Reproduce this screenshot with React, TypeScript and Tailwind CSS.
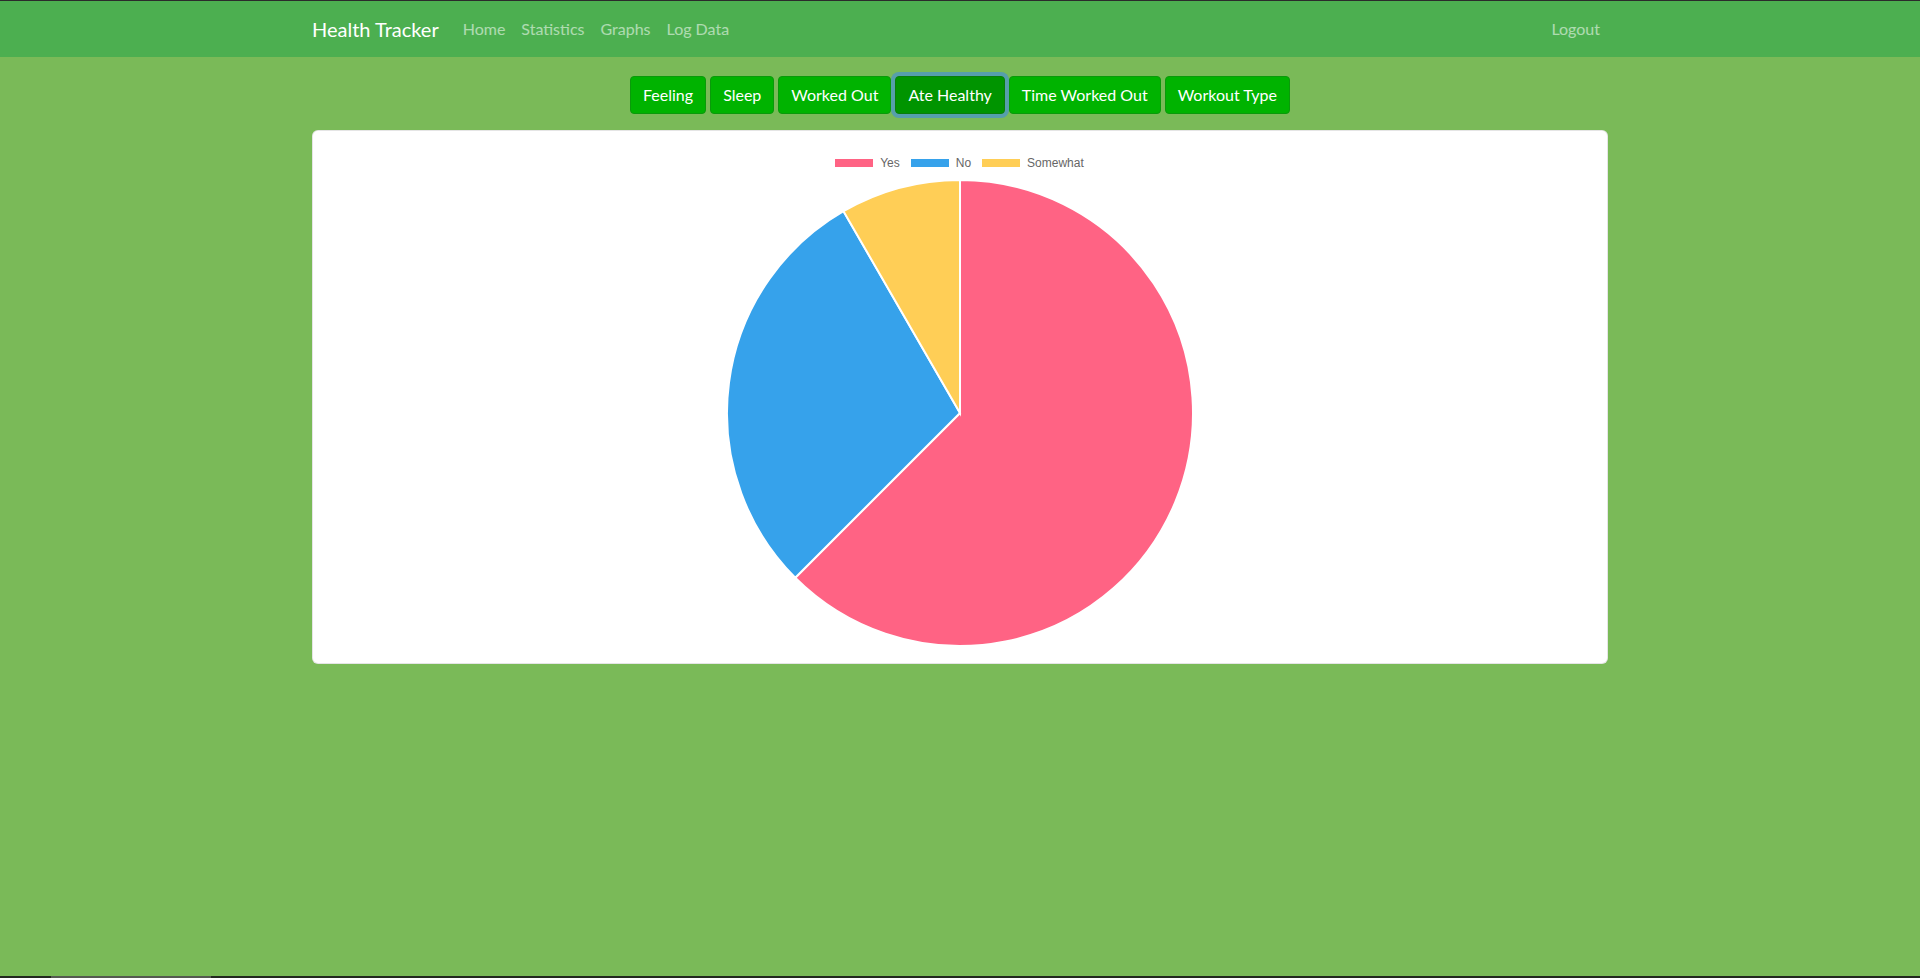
import React from "react";

const buttons = ["Feeling", "Sleep", "Worked Out", "Ate Healthy", "Time Worked Out", "Workout Type"];

const legend = [
  { label: "Yes", color: "bg-[#ff6384]" },
  { label: "No", color: "bg-[#36a2eb]" },
  { label: "Somewhat", color: "bg-[#ffce56]" },
];

function PieChart() {
  return (
    <div className="flex h-[500px] flex-col items-center">
      <div className="flex h-8 items-center pt-[10px] pb-[10px] pl-[8px] font-['Liberation_Sans',Arial,sans-serif] text-[12px] text-[#666]">
        {legend.map((l) => (
          <div key={l.label} className="mr-[10px] flex items-center">
            <span className={`mr-[6px] h-[10px] w-[40px] border border-white ${l.color}`} />
            <span className="leading-3">{l.label}</span>
          </div>
        ))}
      </div>
      <svg width="468" height="468" viewBox="0 0 468 468">
        <path d="M234 234 L234 1 A233 233 0 1 1 69.24 398.76 Z" fill="#ff6384" stroke="#fff" strokeWidth="2" />
        <path d="M234 234 L69.24 398.76 A233 233 0 0 1 117.5 32.21 Z" fill="#36a2eb" stroke="#fff" strokeWidth="2" />
        <path d="M234 234 L117.5 32.21 A233 233 0 0 1 234 1 Z" fill="#ffce56" stroke="#fff" strokeWidth="2" />
      </svg>
    </div>
  );
}

export default function App() {
  return (
    <div className="flex min-h-screen flex-col bg-[#7aba58] font-['Segoe_UI',Lato,sans-serif]">
      <div className="h-px bg-[#2b2b2b]" />
      <nav className="bg-[#4caf50] py-2">
        <div className="mx-auto flex w-[1320px] items-center px-3">
          <span className="mr-4 py-[5px] text-[20px] leading-[30px] text-white">Health Tracker</span>
          <div className="flex">
            {["Home", "Statistics", "Graphs", "Log Data"].map((n) => (
              <a key={n} className="px-2 py-2 text-[16px] leading-6 text-white/55">
                {n}
              </a>
            ))}
          </div>
          <a className="ml-auto px-2 py-2 text-[16px] leading-6 text-white/55">Logout</a>
        </div>
      </nav>

      <main className="flex-1">
        <div className="mt-[19px] flex justify-center gap-1">
          {buttons.map((b) =>
            b === "Ate Healthy" ? (
              <button
                key={b}
                className="rounded border border-[#0a7d0a] bg-[#009400] px-3 py-1.5 text-[16px] leading-6 text-white shadow-[0_0_0_4px_rgba(49,132,253,0.5)]"
              >
                {b}
              </button>
            ) : (
              <button
                key={b}
                className="rounded border border-[#0a9a0a] bg-[#00b300] px-3 py-1.5 text-[16px] leading-6 text-white"
              >
                {b}
              </button>
            )
          )}
        </div>

        <div className="mx-auto mt-4 w-[1320px] px-3">
          <div className="rounded-[6px] border border-black/10 bg-white p-4">
            <PieChart />
          </div>
        </div>
      </main>

      <div className="flex h-[2px] bg-[#22281e]">
        <div className="ml-[51px] w-[160px] bg-[#555a50]" />
      </div>
    </div>
  );
}
